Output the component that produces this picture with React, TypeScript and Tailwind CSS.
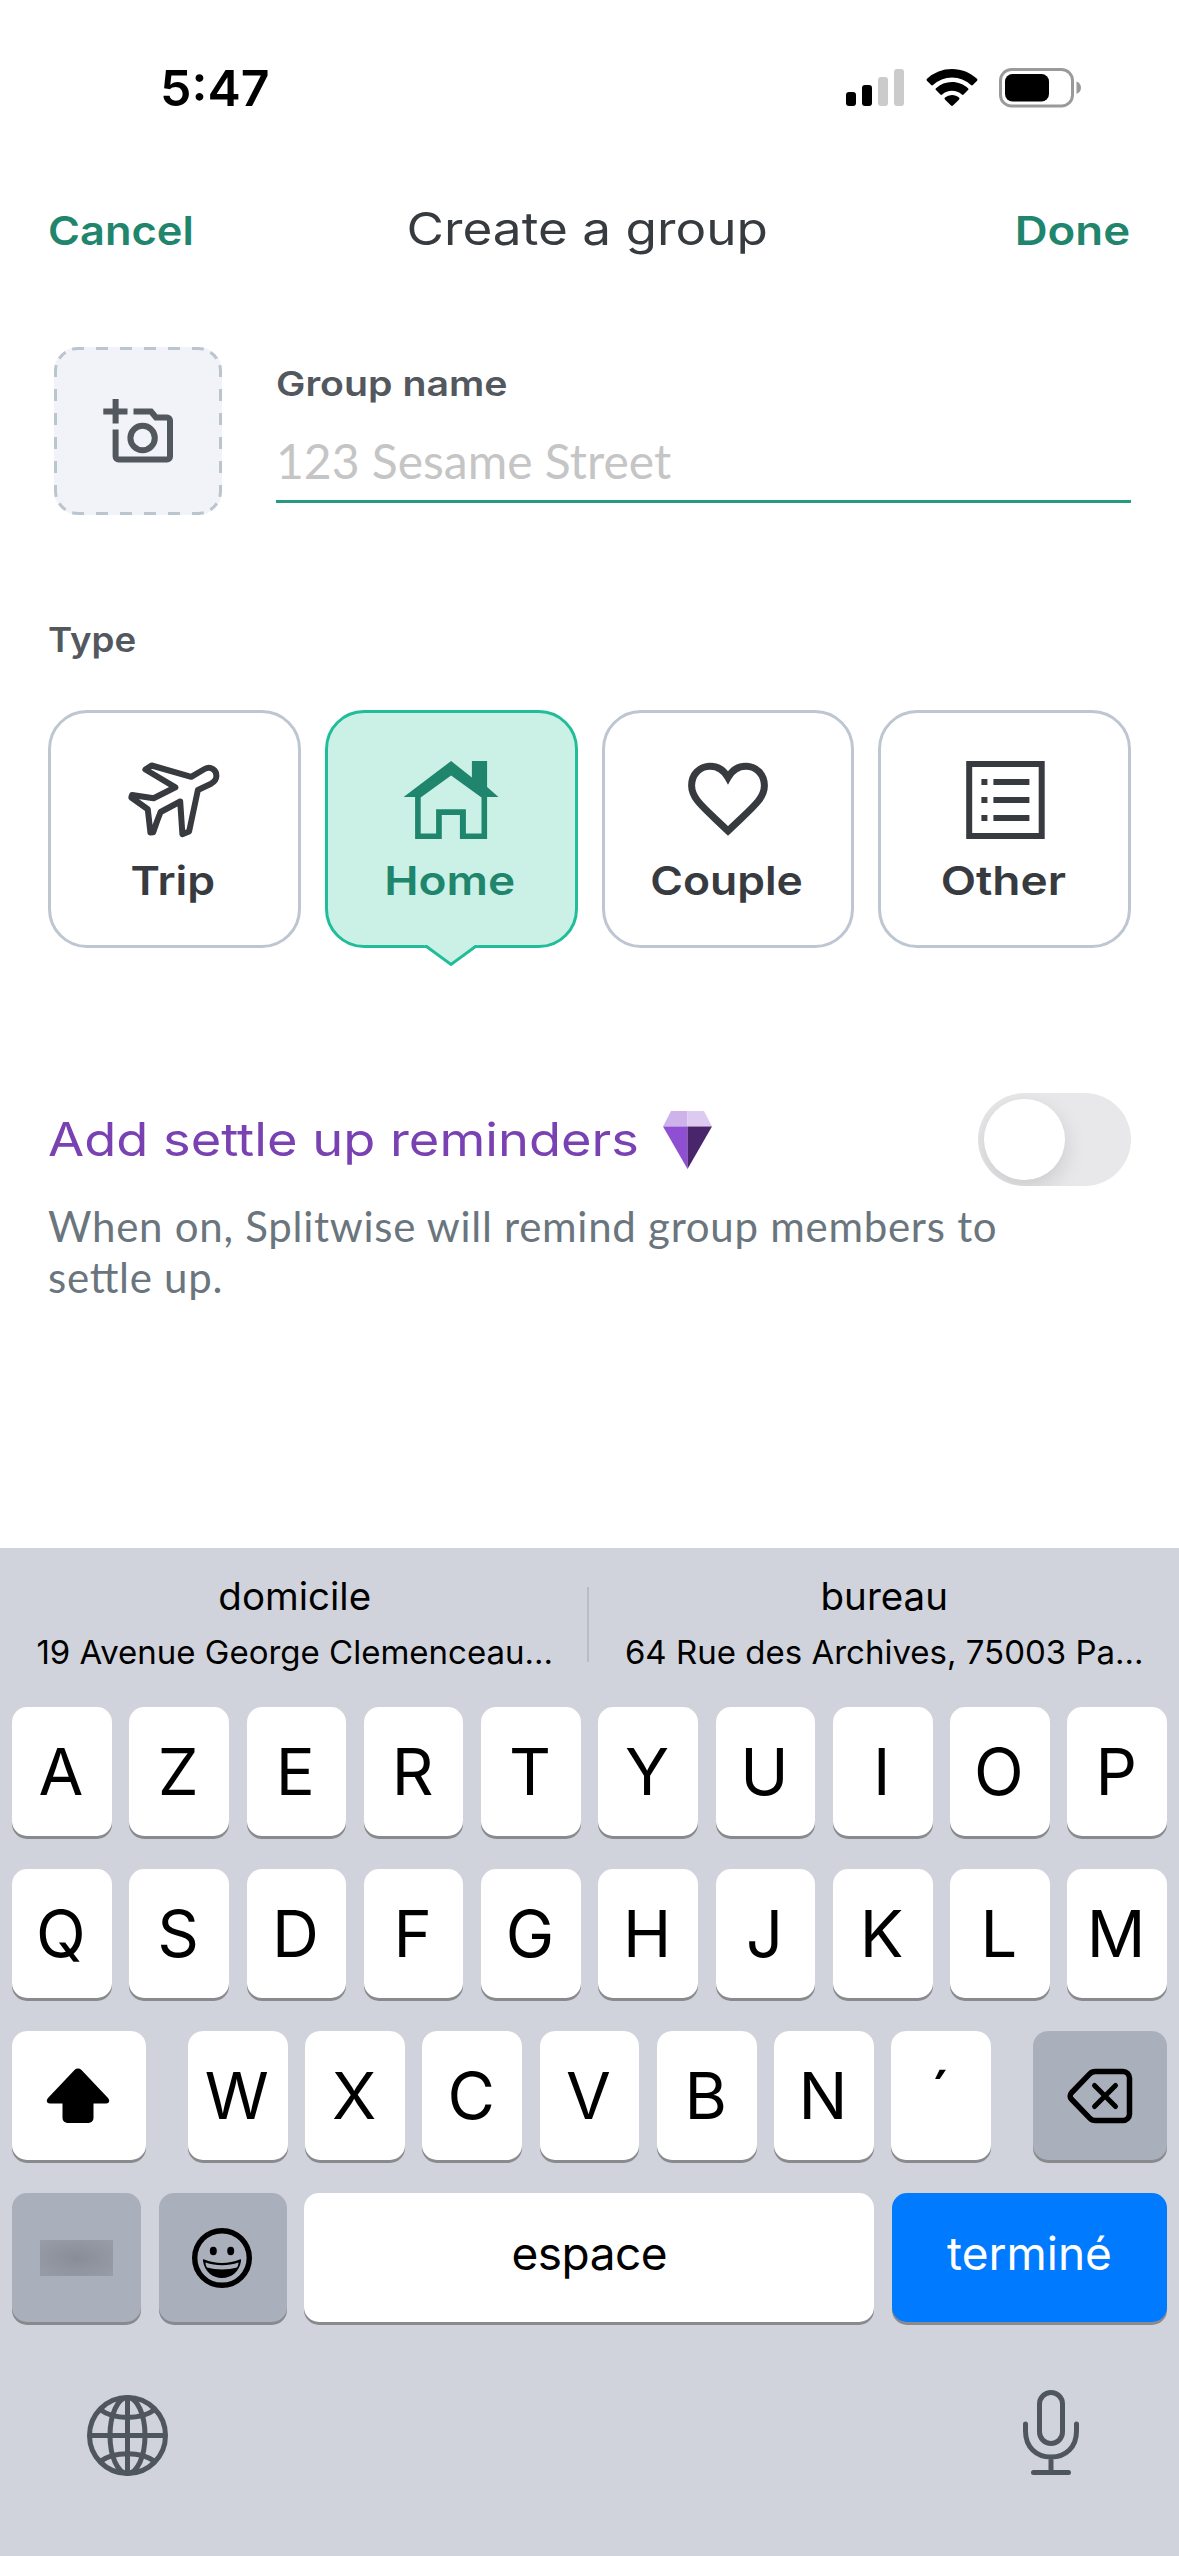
import { useState } from "react";
import type { ReactNode } from "react";
import clsx from "clsx";

const INK = "#373b3f";

function StatusBar() {
  return (
    <div className="flex h-[176px] items-center justify-between pr-[97px] pl-[160px]">
      <span className="text-[50px] leading-none font-semibold text-black">5:47</span>
      <svg width="236" height="40" viewBox="846 68 236 40">
        <rect x="846" y="92" width="10" height="14" rx="3" />
        <rect x="862" y="85" width="10" height="21" rx="3" />
        <rect x="878" y="77" width="10" height="29" rx="3" fill="#cbcbcb" />
        <rect x="894" y="69" width="10" height="37" rx="3" fill="#cbcbcb" />
        <path d="M952 69c9.600 0 18.400 3.700 25 9.800.6.600.6 1.300.1 1.900l-4.300 4.400c-.5.500-1.200.5-1.800 0A28 28 0 0 0 952 77.500a28 28 0 0 0-19 7.600c-.6.500-1.300.5-1.800 0l-4.300-4.400c-.5-.6-.5-1.300.1-1.900A36.800 36.800 0 0 1 952 69z" />
        <path d="M952 82c6.200 0 11.800 2.400 16 6.200.6.600.6 1.300 0 1.900l-4.400 4.400c-.5.500-1.200.5-1.800 0a14.800 14.800 0 0 0-19.600 0c-.6.500-1.300.5-1.800 0l-4.400-4.400c-.6-.6-.6-1.300 0-1.900A23.800 23.800 0 0 1 952 82z" />
        <path d="M952 95c2.700 0 5.200 1 7 2.600.6.600.6 1.200.1 1.800l-6.100 6.200c-.6.600-1.400.6-2 0l-6.100-6.200c-.5-.6-.5-1.200.1-1.800A10.700 10.700 0 0 1 952 95z" />
        <rect x="1000.500" y="69.500" width="72" height="36.500" rx="11" fill="none" stroke="#9a9a9a" strokeWidth="3" />
        <rect x="1005" y="74" width="44" height="27.500" rx="7.500" />
        <path d="M1076.500 81.500c3 1.200 4.500 3.500 4.500 6.200s-1.500 5-4.500 6.200z" fill="#9a9a9a" />
      </svg>
    </div>
  );
}

function PhotoButton() {
  return (
    <button type="button" aria-label="Add photo" className="size-[168px] shrink-0">
      <svg width="168" height="168" viewBox="54 347 168 168" fill="none">
        <rect x="54" y="347" width="168" height="168" rx="24" fill="#f1f3f8" />
        <path
          d="M138 348.500H198a22.500 22.500 0 0 1 22.500 22.500V491a22.500 22.500 0 0 1-22.500 22.500H78a22.500 22.500 0 0 1-22.500-22.500V371a22.500 22.500 0 0 1 22.500-22.500H138"
          stroke="#bbc5cf"
          strokeWidth="3"
          pathLength="621"
          strokeDasharray="0 6 12 12 12 12 12 7.100 9 7.150 12 12 12 12 12 6"
        />
        <g stroke="#52585d" strokeWidth="6">
          <path d="M103.300 411.500H127.500M115.600 399V423.500" />
          <path d="M133.500 411.500H151L156 417.500H167a3 3 0 0 1 3 3V456.500a3 3 0 0 1-3 3H118.600a3 3 0 0 1-3-3V429.500" />
          <circle cx="142.600" cy="438" r="12.200" />
        </g>
      </svg>
    </button>
  );
}

function PlaneIcon() {
  return (
    <svg width="100" height="78" viewBox="124.400 761 100 78" fill="none" stroke={INK} strokeWidth="6" strokeLinejoin="round">
      <path d="M152 765.500L191.600 776.800L205 769C211 765.500 217 770 216.800 776C216.700 780 214.500 782 211.500 783.700L198.300 790L189.500 831.500L182.800 834.200L180.600 801.500L161 812L157.500 821L153.600 832.200L150.800 832.500L148.200 809.300L131.700 797.500L132.500 795L154 798.300L175.800 787.300L145.800 769.500Z" />
    </svg>
  );
}

function HomeIcon() {
  return (
    <svg width="100" height="78" viewBox="401.100 761 100 78" fill="#1f866d" fillRule="evenodd">
      <path d="M451.200 761L472 777.500V761H487.200V787L498.600 797H487.200V839H460V815H441.900V839H415.200V797H403.700ZM451.200 775.500L420.800 797.500V833.500H436.200V809.200H466V833.500H481.600V797.500Z" />
    </svg>
  );
}

function HeartIcon() {
  return (
    <svg width="100" height="78" viewBox="677.900 761 100 78" fill="none" stroke={INK} strokeWidth="7">
      <path d="M727.900 777.500C724 770.500 718 766.200 710 766.200C699.500 766.200 691.500 774.500 691.500 785.500C691.500 799 703 807 727.900 831C752.800 807 764.300 799 764.300 785.500C764.300 774.500 756.300 766.200 745.800 766.200C737.800 766.200 731.800 770.500 727.900 777.500Z" />
    </svg>
  );
}

function ListIcon() {
  return (
    <svg width="100" height="78" viewBox="954.600 761 100 78" fill="none" stroke={INK} strokeWidth="6">
      <rect x="968.800" y="764" width="72.500" height="72" />
      <path d="M981 782H987M993 782H1029M981 800H987M993 800H1029M981 818H987M993 818H1029" />
    </svg>
  );
}

// stretch widens each label, the button face is wider than Inter
const TYPES: { label: string; icon: ReactNode; stretch: string }[] = [
  { label: "Trip", icon: <PlaneIcon />, stretch: "scale-x-[1.115]" },
  { label: "Home", icon: <HomeIcon />, stretch: "scale-x-[1.15]" },
  { label: "Couple", icon: <HeartIcon />, stretch: "scale-x-[1.11]" },
  { label: "Other", icon: <ListIcon />, stretch: "scale-x-[1.15]" },
];

function TypePicker() {
  const [selected, setSelected] = useState("Home");

  return (
    <div className="mt-[50px] grid grid-cols-4 gap-6 px-12">
      {TYPES.map((t) => {
        const active = t.label === selected;
        return (
          <button
            key={t.label}
            type="button"
            onClick={() => setSelected(t.label)}
            className={clsx(
              "relative flex h-[238px] flex-col items-center rounded-[39px] border-[3px] pt-12",
              active ? "border-[#20bd98] bg-[#cbf1e7] text-[#1f866d]" : "border-[#bdc6d1] bg-white text-[#373b3f]"
            )}
          >
            {t.icon}
            <span className={clsx("mt-[18px] pr-0.5 text-[40px] leading-[48px] font-semibold", t.stretch)}>{t.label}</span>
            {active && (
              <svg className="absolute -bottom-[22px] left-1/2 -translate-x-1/2" width="54" height="23" viewBox="0 0 54 23">
                <path d="M0 0H54V1.200L51 1.200L27 19.500L3 1.200L0 1.200Z" fill="#cbf1e7" />
                <path d="M1 2.500H2.500L27 20.500L51.500 2.500H53" fill="none" stroke="#20bd98" strokeWidth="3" />
              </svg>
            )}
          </button>
        );
      })}
    </div>
  );
}

function Reminders() {
  const [on, setOn] = useState(false);

  return (
    <section className="mt-[145px] px-12">
      <div className="flex h-[93px] items-center">
        <h2 className="w-[590px] origin-left scale-x-[1.139] pb-0.5 text-[46px] leading-none whitespace-nowrap text-[#7941b2]">
          Add settle up reminders
        </h2>
        <svg className="ml-[25px]" width="49" height="58" viewBox="0 0 49 58">
          <path d="M8 0H24.500V15.500H0Z" fill="#ceb3ea" />
          <path d="M24.500 0H41L49 15.500H24.500Z" fill="#dccaf0" />
          <path d="M0 15.500H24.500V58Z" fill="#8f4fd3" />
          <path d="M24.500 15.500H49L24.500 58Z" fill="#49256b" />
        </svg>
        <button
          type="button"
          role="switch"
          aria-checked={on}
          aria-label="Add settle up reminders"
          onClick={() => setOn(!on)}
          className={clsx(
            "ml-auto flex h-[93px] w-[153px] overflow-hidden rounded-full p-1.5",
            on ? "justify-end bg-[#20bd98]" : "bg-[#e8e8ea]"
          )}
        >
          <span className="size-[81px] rounded-full bg-white shadow-[0_8px_22px_rgba(0,0,0,0.13)]" />
        </button>
      </div>
      <p className="mt-[15px] w-[1000px] font-[Lato,sans-serif] text-[42px] leading-[51px] tracking-[0.73px] text-[#6a757d] [font-feature-settings:'liga']">
        When on, Splitwise will remind group members to settle up.
      </p>
    </section>
  );
}

function Key({ children, className = "flex-1 bg-white pr-0.5 text-[65px]" }: { children?: ReactNode; className?: string }) {
  return (
    <button
      type="button"
      className={clsx("flex h-[129px] items-center justify-center rounded-[15px] leading-none shadow-[0_3px_0_#888a8e]", className)}
    >
      {children}
    </button>
  );
}

function Suggestion({ title, address }: { title: string; address: string }) {
  return (
    <div className="flex w-1/2 flex-col items-center pt-6 text-black">
      <span className="text-[38.5px] leading-[48px]">{title}</span>
      <span className="mt-3 text-[33px] leading-10 whitespace-nowrap">{address}</span>
    </div>
  );
}

function Keyboard() {
  return (
    <div className="mt-auto h-[1008px] bg-[#d0d3db]">
      <div className="relative flex h-[159px]">
        <Suggestion title="domicile" address="19 Avenue George Clemenceau…" />
        <div className="absolute top-[39px] left-[587px] h-[75px] w-[2px] bg-[#b9bcc4]" />
        <Suggestion title="bureau" address="64 Rue des Archives, 75003 Pa…" />
      </div>

      <div className="flex flex-col gap-[33px] px-3">
        {["AZERTYUIOP", "QSDFGHJKLM"].map((row) => (
          <div key={row} className="flex gap-[17.6px]">
            {row.split("").map((c) => (
              <Key key={c}>{c}</Key>
            ))}
          </div>
        ))}

        <div className="flex justify-between">
          <Key className="w-[134px] bg-white pr-0.5">
            <svg width="64" height="56" viewBox="0 0 64 56">
              <path d="M28.500 2a5 5 0 0 1 7 0L62 30c2.200 2.400 1.300 5.600-2 5.600H47.500V50a5 5 0 0 1-5 5h-21a5 5 0 0 1-5-5V35.600H4C.7 35.600-.2 32.400 2 30z" />
            </svg>
          </Key>
          <div className="flex w-[803px] gap-[17.6px]">
            {"WXCVBN´".split("").map((c) => (
              <Key key={c}>{c}</Key>
            ))}
          </div>
          <Key className="w-[134px] bg-[#a9afbb]">
            <svg width="66" height="56" viewBox="0 0 66 56" fill="none" stroke="#000" strokeWidth="5.500" strokeLinecap="round" strokeLinejoin="round">
              <path d="M28.500 3.500H56a6.500 6.500 0 0 1 6.500 6.500V46a6.500 6.500 0 0 1-6.500 6.500H28.500a8 8 0 0 1-5.800-2.400L4.300 31a4.500 4.500 0 0 1 0-6L22.700 5.900A8 8 0 0 1 28.500 3.500z" />
              <path d="M27.500 17.500L48.500 38.500M48.500 17.500L27.500 38.500" strokeWidth="5" />
            </svg>
          </Key>
        </div>

        <div className="flex gap-[17.6px]">
          <Key className="w-[129px] bg-[#a9afbb]">
            <span className="h-9 w-[73px] bg-radial from-[#898d97] to-[#989da8]" />
          </Key>
          <Key className="w-[128px] bg-[#a9afbb] pr-0.5">
            <svg width="60" height="60" viewBox="0 0 60 60">
              <circle cx="30" cy="30" r="27.300" fill="none" stroke="#000" strokeWidth="5.400" />
              <ellipse cx="21.300" cy="23" rx="3.500" ry="4.200" />
              <ellipse cx="38.700" cy="23" rx="3.500" ry="4.200" />
              <path d="M12.300 31.500C23 36 37 36 47.700 31.500C48.700 31 49.200 31.600 49 33C47.500 43.500 39.500 50 30 50S12.500 43.500 11 33C10.800 31.600 11.300 31 12.300 31.500z" />
              <path d="M13.500 34.500C24 38 36 38 46.500 34.500C46.300 37 45.800 38.300 45 39.500C36 42 24 42 15 39.500C14.200 38.300 13.700 37 13.500 34.500z" fill="#a9afbb" />
            </svg>
          </Key>
          <Key className="flex-1 bg-white pb-2.5 text-[46px] tracking-[-0.5px]">espace</Key>
          <Key className="w-[275px] bg-[#007aff] pb-2.5 text-[46px] text-white">terminé</Key>
        </div>
      </div>

      <div className="flex justify-between px-[86px] pt-[67px]">
        <svg className="mt-[5px]" width="83" height="83" viewBox="86 2394 83 83" fill="none" stroke="#50565f" strokeWidth="5">
          <circle cx="127.500" cy="2435.500" r="38" />
          <ellipse cx="127.500" cy="2435.500" rx="17.500" ry="38" />
          <path d="M127.500 2397.500V2473.500M89.500 2435.500H165.500" />
          <path d="M100 2409.500C114 2420 141 2420 155 2409.500M100 2461.500C114 2451 141 2451 155 2461.500" />
        </svg>
        <svg className="mr-[13px]" width="58" height="87" viewBox="1022 2389 58 87" fill="none" stroke="#50565f" strokeWidth="5" strokeLinecap="round">
          <rect x="1039.500" y="2392.500" width="23" height="51" rx="11.500" />
          <path d="M1025.500 2424V2431C1025.500 2447 1036 2457 1051 2457S1076.500 2447 1076.500 2431V2424M1051 2457V2472M1033.500 2472.500H1068.500" />
        </svg>
      </div>
    </div>
  );
}

export default function App() {
  return (
    <main className="flex h-[2556px] w-[1179px] flex-col overflow-hidden bg-white font-[Inter,sans-serif]">
      <StatusBar />

      <header className="grid h-[109px] grid-cols-[1fr_auto_1fr] items-center px-12 leading-none">
        <button type="button" className="origin-left scale-x-[1.085] justify-self-start text-[40px] font-semibold text-[#1f866d]">
          Cancel
        </button>
        <h1 className="scale-x-[1.14] pr-1 pb-1 text-[45px] text-[#373b3f]">Create a group</h1>
        <button type="button" className="origin-right scale-x-[1.14] justify-self-end pr-px text-[40px] font-semibold text-[#1f866d]">
          Done
        </button>
      </header>

      <div className="mt-[62px] flex gap-[54px] pr-12 pl-[54px]">
        <PhotoButton />
        <label className="flex flex-1 flex-col pt-[17px]">
          <span className="origin-left scale-x-[1.154] text-[34px] leading-10 font-semibold text-[#52585d]">Group name</span>
          <input
            type="text"
            placeholder="123 Sesame Street"
            className="mt-[17px] h-[82px] w-full border-b-[3px] border-[#279b80] font-[Lato,sans-serif] text-[48px] outline-none placeholder:text-[#c5c5c6]"
          />
        </label>
      </div>

      <h2 className="mt-[104px] ml-12 w-20 origin-left scale-x-[1.08] text-[34px] leading-[41px] font-semibold text-[#52585d]">Type</h2>
      <TypePicker />
      <Reminders />
      <Keyboard />
    </main>
  );
}
